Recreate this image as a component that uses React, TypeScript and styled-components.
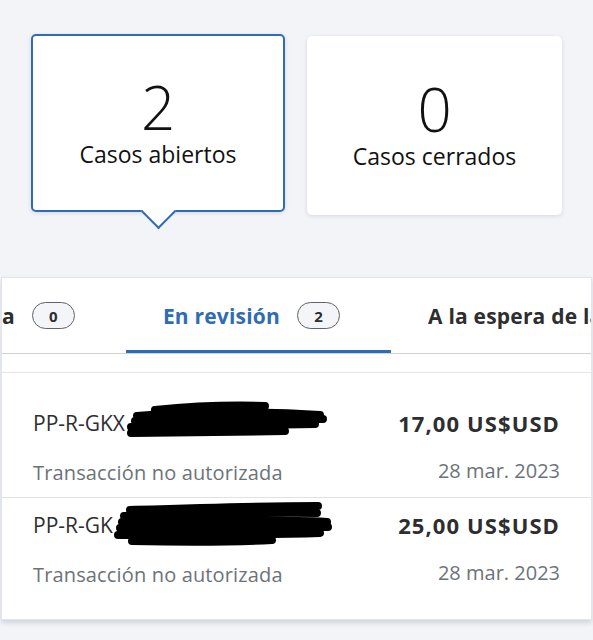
import React, { useLayoutEffect, useRef } from "react";
import styled, { createGlobalStyle } from "styled-components";

const GlobalStyle = createGlobalStyle`
  html, body {
    margin: 0;
    padding: 0;
    background: #f3f4f8;
    font-family: "Open Sans", "Noto Sans", Arial, sans-serif;
    color: #1d1d1f;
  }
  * { box-sizing: border-box; }
`;

const Page = styled.div`
  width: 593px;
  min-height: 640px;
  padding-top: 34px;
  display: flex;
  flex-direction: column;
`;

const CardRow = styled.div`
  display: flex;
  align-items: flex-start;
  gap: 22px;
  padding-left: 31px;
`;

const Card = styled.div<{ $active?: boolean }>`
  position: relative;
  width: ${(p) => (p.$active ? 254 : 255)}px;
  height: ${(p) => (p.$active ? 178 : 179)}px;
  margin-top: ${(p) => (p.$active ? 0 : 2)}px;
  background: #fff;
  border-radius: 5px;
  border: ${(p) => (p.$active ? "2px solid #2f6cb3" : "none")};
  box-shadow: 0 1px 4px rgba(30, 40, 60, 0.14);
  display: flex;
  flex-direction: column;
  align-items: center;
  padding-top: ${(p) => (p.$active ? 41 : 43)}px;

  ${(p) =>
    p.$active &&
    `
    &::after {
      content: "";
      position: absolute;
      left: 50%;
      bottom: -14px;
      width: 23px;
      height: 23px;
      margin-left: -12px;
      background: #fff;
      border-right: 2px solid #2f6cb3;
      border-bottom: 2px solid #2f6cb3;
      transform: rotate(45deg);
    }
  `}
`;

const CardNumber = styled.div`
  font-size: 60px;
  font-weight: 300;
  line-height: 60px;
  color: #111;
`;

const CardLabel = styled.div`
  font-size: 23px;
  font-weight: 400;
  line-height: 30px;
  color: #111;
  margin-top: 2px;
`;

const Panel = styled.div`
  margin: 62px 1px 0 1px;
  background: #fff;
  border: 1px solid #e1e4e9;
  box-shadow: 0 3px 5px rgba(40, 50, 70, 0.16);
`;

const TabStrip = styled.div`
  display: flex;
  height: 76px;
  overflow: hidden;
  border-bottom: 1px solid #cfd2d6;
`;

const Tab = styled.div<{ $active?: boolean }>`
  flex: none;
  display: flex;
  align-items: center;
  gap: 17px;
  padding: 0 51px 0 37px;
  position: relative;
  color: ${(p) => (p.$active ? "#2f6cb3" : "#2c2e2f")};
  font-size: 21px;
  font-weight: 700;
  letter-spacing: 0.2px;
  white-space: nowrap;

  ${(p) =>
    p.$active &&
    `
    &::after {
      content: "";
      position: absolute;
      left: 0;
      right: 0;
      bottom: 0;
      height: 3px;
      background: #2f6cb3;
    }
  `}
`;

const Badge = styled.span`
  display: inline-flex;
  align-items: center;
  justify-content: center;
  min-width: 43px;
  height: 27px;
  padding: 0 12px;
  border: 1.5px solid #5f6266;
  border-radius: 14px;
  background: #f4f5f8;
  color: #2c2e2f;
  font-size: 15px;
  font-weight: 700;
  letter-spacing: 0;
`;

const Spacer = styled.div`
  height: 19px;
  border-bottom: 1px solid #e3e5e9;
`;

const List = styled.div`
  padding: 23px 0 20px;
`;

const Row = styled.div`
  position: relative;
  display: flex;
  flex-direction: column;
  gap: 22px;
  padding: 13px 31px 10px 31px;
  & + & {
    border-top: 1px solid #dfe2e6;
  }
`;

const RowLine = styled.div`
  display: flex;
  justify-content: space-between;
  align-items: center;
  line-height: 28px;
`;

const CaseId = styled.span`
  font-size: 21px;
  font-weight: 400;
  color: #2c2e2f;
`;

const Amount = styled.span`
  font-size: 22px;
  font-weight: 700;
  letter-spacing: 1.1px;
  color: #2c2e2f;
`;

const Reason = styled.span`
  font-size: 20px;
  letter-spacing: 0.15px;
  color: #6c7378;
`;

const DateText = styled.span`
  font-size: 20px;
  color: #6c7378;
  margin-top: -4px;
`;

const Redaction = styled.svg`
  position: absolute;
  pointer-events: none;
`;

function Scribble({ variant }: { variant: 1 | 2 }) {
  if (variant === 1) {
    return (
      <Redaction
        width="230"
        height="44"
        viewBox="0 0 230 44"
        style={{ left: 103, top: 4 }}
      >
        <g stroke="#000" strokeWidth="8" strokeLinecap="round" fill="none">
          <path d="M50 10 C90 6, 130 5, 160 6" />
          <path d="M32 16 C80 12, 150 11, 215 15" />
          <path d="M30 21 C80 19, 150 18, 218 19" />
          <path d="M26 27 C70 26, 140 25, 210 24" />
          <path d="M26 33 C70 32, 120 32, 180 31" />
        </g>
      </Redaction>
    );
  }
  return (
    <Redaction
      width="240"
      height="48"
      viewBox="0 0 240 48"
      style={{ left: 100, top: 2 }}
    >
      <g stroke="#000" strokeWidth="8" strokeLinecap="round" fill="none">
        <path d="M28 10 C90 8, 150 6, 216 6" />
        <path d="M22 16 C90 14, 160 12, 215 13" />
        <path d="M20 22 C90 21, 170 19, 225 22" />
        <path d="M18 28 C90 28, 170 27, 226 27" />
        <path d="M16 35 C80 35, 150 35, 218 33" />
        <path d="M30 41 C80 42, 130 42, 170 40" />
      </g>
    </Redaction>
  );
}

type CaseItem = { id: string; amount: string; reason: string; date: string };

const cases: CaseItem[] = [
  { id: "PP-R-GKX", amount: "17,00 US$USD", reason: "Transacción no autorizada", date: "28 mar. 2023" },
  { id: "PP-R-GK", amount: "25,00 US$USD", reason: "Transacción no autorizada", date: "28 mar. 2023" },
];

export default function App() {
  const stripRef = useRef<HTMLDivElement>(null);
  const firstBadgeRef = useRef<HTMLSpanElement>(null);

  useLayoutEffect(() => {
    const strip = stripRef.current;
    const badge = firstBadgeRef.current;
    if (strip && badge) {
      const offset = badge.getBoundingClientRect().left - strip.getBoundingClientRect().left;
      strip.scrollLeft = offset - 30;
    }
  }, []);

  return (
    <>
      <GlobalStyle />
      <Page>
        <CardRow>
          <Card $active>
            <CardNumber>2</CardNumber>
            <CardLabel>Casos abiertos</CardLabel>
          </Card>
          <Card>
            <CardNumber>0</CardNumber>
            <CardLabel>Casos cerrados</CardLabel>
          </Card>
        </CardRow>
        <Panel>
          <TabStrip ref={stripRef}>
            <Tab>
              Respuesta necesaria
              <Badge ref={firstBadgeRef}>0</Badge>
            </Tab>
            <Tab $active>
              En revisión
              <Badge>2</Badge>
            </Tab>
            <Tab>
              A la espera de la respuesta
              <Badge>0</Badge>
            </Tab>
          </TabStrip>
          <Spacer />
          <List>
            {cases.map((c, i) => (
              <Row key={i}>
                <RowLine>
                  <CaseId>{c.id}</CaseId>
                  <Amount>{c.amount}</Amount>
                </RowLine>
                <RowLine>
                  <Reason>{c.reason}</Reason>
                  <DateText>{c.date}</DateText>
                </RowLine>
                <Scribble variant={(i + 1) as 1 | 2} />
              </Row>
            ))}
          </List>
        </Panel>
      </Page>
    </>
  );
}
